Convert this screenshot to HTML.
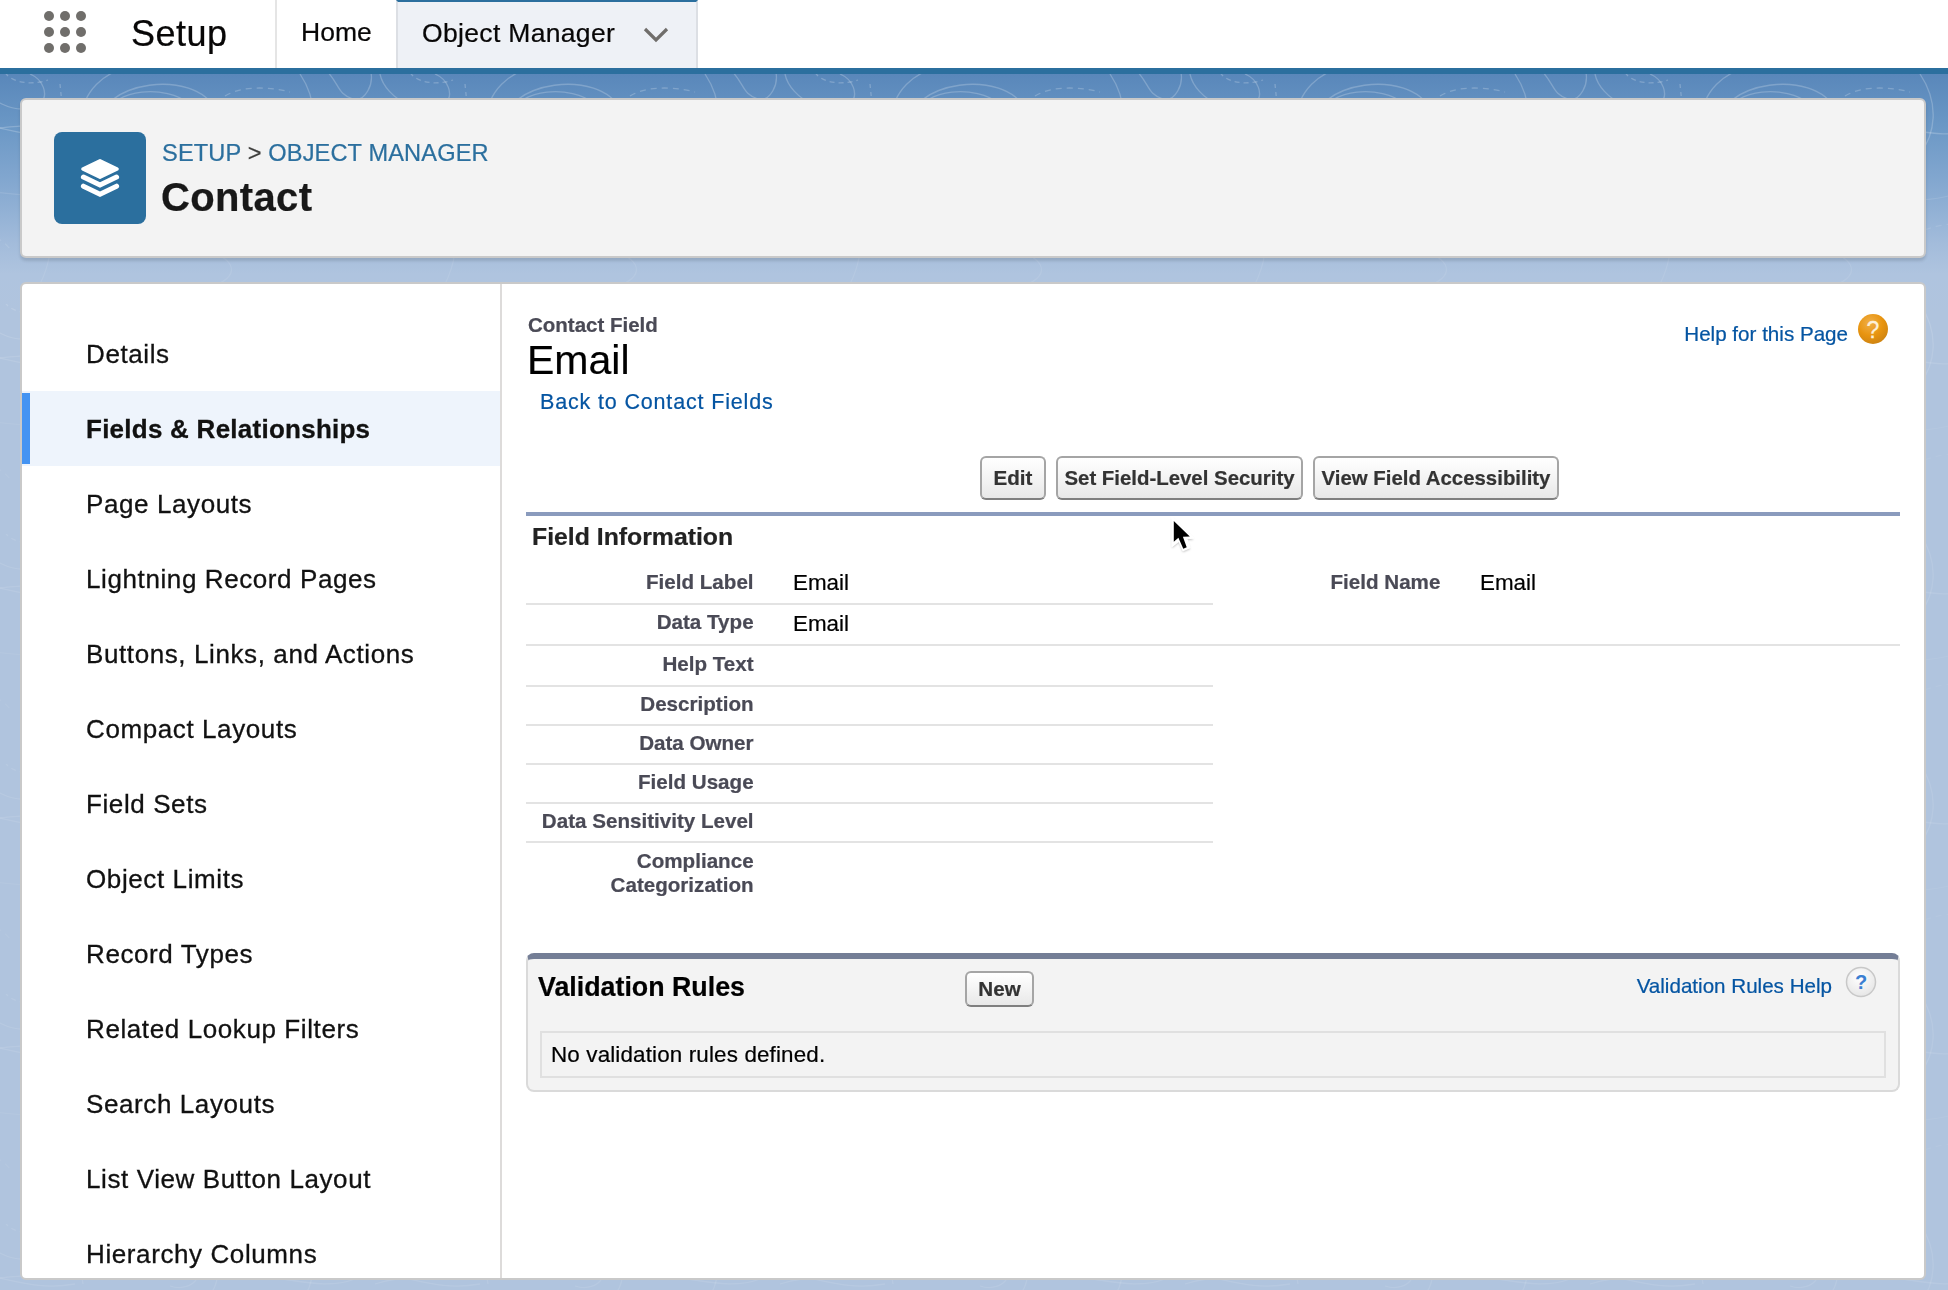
<!DOCTYPE html>
<html><head><meta charset="utf-8">
<style>
*{box-sizing:border-box;margin:0;padding:0}
html,body{width:1948px;height:1290px;overflow:hidden}
.abs,.side,.lbl,.val,.btn{will-change:transform}
.abs,.lbl,.val,.btn{-webkit-text-stroke-width:0.22px}
body{position:relative;font-family:"Liberation Sans",sans-serif;background:#b0c4de;color:#080707}
.abs{position:absolute;white-space:nowrap}
#nav{position:absolute;left:0;top:0;width:1948px;height:68px;background:#fff}
.dot{position:absolute;width:10px;height:10px;border-radius:50%;background:#706e6b}
#bar{position:absolute;left:0;top:68px;width:1948px;height:6px;background:#2b6f9e}
#bg{position:absolute;left:0;top:74px;width:1948px;height:1216px;background:linear-gradient(to bottom,#5987ba 0px,#6a97c5 50px,#84a8d0 110px,#a3bcdb 170px,#afc4df 200px,#b0c4de 240px)}
#hdr{position:absolute;left:20px;top:98px;width:1906px;height:160px;background:#f3f3f3;border:2px solid #c9c9c9;border-radius:6px;box-shadow:0 3px 3px rgba(0,0,0,.12)}
#main{position:absolute;left:20px;top:282px;width:1906px;height:998px;background:#fff;border:2px solid #c9c9c9;border-radius:6px;overflow:hidden}
.side{position:absolute;left:86px;margin-top:1px;font-size:26px;line-height:75px;color:#111;letter-spacing:0.6px;-webkit-text-stroke:0.3px #111}
.lbl{position:absolute;font-weight:bold;font-size:20.6px;color:#4a4a56;text-align:right}
.val{position:absolute;font-size:22.4px;color:#000}
.hr{position:absolute;height:2px;background:#e3e3e3}
.btn{position:absolute;border:2px solid #a5a5a5;border-bottom-color:#7f7f7f;border-radius:6px;background:linear-gradient(#fff 0%,#f4f4f4 50%,#e8e8e8 100%);font-weight:bold;font-size:20.6px;color:#333;text-align:center}
a,.link{color:#0555a2;text-decoration:none}
</style></head>
<body>
<div id="nav">
  <div class="dot" style="left:44px;top:11px"></div><div class="dot" style="left:60px;top:11px"></div><div class="dot" style="left:76px;top:11px"></div>
  <div class="dot" style="left:44px;top:27px"></div><div class="dot" style="left:60px;top:27px"></div><div class="dot" style="left:76px;top:27px"></div>
  <div class="dot" style="left:44px;top:43px"></div><div class="dot" style="left:60px;top:43px"></div><div class="dot" style="left:76px;top:43px"></div>
  <div class="abs" style="left:131px;top:12px;font-size:36px;line-height:44px;color:#080707;letter-spacing:0.5px">Setup</div>
  <div style="position:absolute;left:275px;top:0;width:2px;height:68px;background:#e5e5e5"></div>
  <div class="abs" style="left:301px;top:14px;font-size:26.5px;line-height:36px;color:#080707">Home</div>
  <div style="position:absolute;left:396px;top:0;width:302px;height:68px;background:#eef1f6;border-left:2px solid #dcdfe4;border-right:2px solid #dcdfe4;border-top:2px solid #2b6f9e"></div>
  <div class="abs" style="left:422px;top:14.7px;font-size:26.5px;line-height:36px;color:#080707;letter-spacing:0.33px">Object Manager</div>
  <svg style="position:absolute;left:642px;top:26px" width="28" height="18" viewBox="0 0 28 18"><path d="M3 3 L14 14 L25 3" fill="none" stroke="#706e6b" stroke-width="3.2"/></svg>
</div>
<div id="bar"></div>
<div id="bg"><svg width="1948" height="1216" style="position:absolute;left:0;top:0">
<defs><pattern id="topo" x="-330" y="0" width="405" height="230" patternUnits="userSpaceOnUse">
<g fill="none" stroke="#ffffff" stroke-opacity="0.22" stroke-width="1.3">
<path d="M30 40 C40 15 90 10 115 30 C135 45 120 70 95 62"/>
<path d="M20 55 C25 5 120 -5 140 35 C150 60 130 90 100 80"/>
<path d="M55 40 L62 28 L70 40 L80 30 L90 42"/>
<path d="M8 60 C0 20 30 -10 75 -8" />
<path d="M150 22 C170 10 200 14 215 18" stroke-dasharray="6 5"/>
<path d="M225 0 C245 30 240 60 225 80"/>
<path d="M250 -5 C265 10 262 20 278 25 C290 28 300 10 295 -5"/>
<path d="M305 0 C310 25 350 45 370 30 C380 20 372 5 360 0"/>
<path d="M335 -2 C340 8 360 12 378 6" stroke-dasharray="5 4"/>
<path d="M390 10 L392 30" stroke-dasharray="4 4"/>
<path d="M300 60 C330 50 360 55 400 45"/>
<path d="M160 55 C200 45 240 70 280 55 C320 40 350 70 405 60"/>
<path d="M0 120 C40 100 80 130 120 115 C160 100 200 140 260 120 C300 105 340 130 405 118" stroke-opacity="0.12"/>
<path d="M30 170 C60 150 120 160 150 185 C170 200 140 220 110 210" stroke-opacity="0.12"/>
<path d="M220 160 C260 140 320 150 340 175" stroke-dasharray="6 5" stroke-opacity="0.12"/>
<path d="M350 100 C380 130 390 170 370 210" stroke-opacity="0.12"/>
</g></pattern></defs>
<linearGradient id="tm" x1="0" y1="0" x2="0" y2="1216" gradientUnits="userSpaceOnUse"><stop offset="0" stop-color="#fff"/><stop offset="0.12" stop-color="#fff" stop-opacity="0.85"/><stop offset="0.25" stop-color="#fff" stop-opacity="0.45"/><stop offset="1" stop-color="#fff" stop-opacity="0.45"/></linearGradient><mask id="tmask"><rect x="0" y="0" width="1948" height="1216" fill="url(#tm)"/></mask>
<rect x="0" y="0" width="1948" height="1216" fill="url(#topo)" mask="url(#tmask)"/>
</svg></div>

<div id="hdr"></div>
<div style="position:absolute;left:54px;top:132px;width:92px;height:92px;border-radius:8px;background:#2b6f9e"></div>
<svg style="position:absolute;left:70px;top:150px" width="60" height="56" viewBox="70 150 60 56">
  <path d="M100 160.6 L117.2 169 L100 177.3 L82.8 169 Z" fill="#fff" stroke="#fff" stroke-width="3.2" stroke-linejoin="round"/>
  <path d="M83.4 177 L100 185 L116.6 177" fill="none" stroke="#fff" stroke-width="5" stroke-linecap="round" stroke-linejoin="miter"/>
  <path d="M83.4 186.2 L100 194.2 L116.6 186.2" fill="none" stroke="#fff" stroke-width="5" stroke-linecap="round" stroke-linejoin="miter"/>
</svg>
<div class="abs" style="left:161.5px;top:137.5px;font-size:23.6px;line-height:30px;color:#2b6f9e;letter-spacing:0.14px">SETUP <span style="color:#3e3e3c">&gt;</span> OBJECT MANAGER</div>
<div class="abs" style="left:161px;top:174px;font-size:40px;line-height:46px;font-weight:bold;color:#181818;letter-spacing:0.35px">Contact</div>

<div id="main">
  <div style="position:absolute;left:478px;top:0;width:2px;height:1000px;background:#dddbda"></div>
  <div style="position:absolute;left:0;top:107px;width:478px;height:75px;background:#eef4fc"></div>
  <div style="position:absolute;left:0;top:109px;width:8px;height:71px;background:#4594f2"></div>
</div>
<div id="sidebar">
  <div class="side" style="top:316px">Details</div>
  <div class="side" style="top:391px;font-weight:bold;letter-spacing:0.25px">Fields &amp; Relationships</div>
  <div class="side" style="top:466px">Page Layouts</div>
  <div class="side" style="top:541px">Lightning Record Pages</div>
  <div class="side" style="top:616px">Buttons, Links, and Actions</div>
  <div class="side" style="top:691px">Compact Layouts</div>
  <div class="side" style="top:766px">Field Sets</div>
  <div class="side" style="top:841px">Object Limits</div>
  <div class="side" style="top:916px">Record Types</div>
  <div class="side" style="top:991px">Related Lookup Filters</div>
  <div class="side" style="top:1066px">Search Layouts</div>
  <div class="side" style="top:1141px">List View Button Layout</div>
  <div class="side" style="top:1216px">Hierarchy Columns</div>
</div>

<!-- content -->
<div id="content">
  <div class="abs" style="left:528px;top:315.4px;font-size:20.5px;line-height:1;font-weight:bold;color:#4a4a56">Contact Field</div>
  <div class="abs" style="left:526.5px;top:339.6px;font-size:41px;line-height:1;color:#000">Email</div>
  <div class="abs link" style="left:540px;top:391.6px;font-size:21.5px;line-height:1;letter-spacing:0.84px">Back to Contact Fields</div>
  <div class="abs link" style="left:1600px;width:248px;text-align:right;top:324.3px;font-size:20.6px;line-height:1">Help for this Page</div>
  <svg style="position:absolute;left:1856px;top:312px" width="34" height="34" viewBox="0 0 34 34">
    <defs><radialGradient id="og" cx="40%" cy="30%" r="70%"><stop offset="0" stop-color="#f0b04a"/><stop offset="0.6" stop-color="#e8940f"/><stop offset="1" stop-color="#d08512"/></radialGradient></defs>
    <circle cx="17" cy="17" r="15" fill="url(#og)"/>
    <text x="17" y="25.5" text-anchor="middle" font-family="Liberation Sans" font-size="23" fill="#fdf0d8" stroke="#fdf0d8" stroke-width="0.3">?</text>
  </svg>
  <div class="btn" style="left:980px;top:456px;width:66px;height:44px;line-height:40px">Edit</div>
  <div class="btn" style="left:1056px;top:456px;width:247px;height:44px;line-height:40px;font-size:20.4px">Set Field-Level Security</div>
  <div class="btn" style="left:1313px;top:456px;width:246px;height:44px;line-height:40px;font-size:20.4px">View Field Accessibility</div>
  <div style="position:absolute;left:526px;top:512px;width:1374px;height:4px;background:#8a9bbd"></div>
  <div class="abs" style="left:532px;top:525.1px;font-size:24.8px;line-height:1;font-weight:bold;color:#222">Field Information</div>

  <div class="lbl" style="left:526px;width:227.6px;top:571.6px;line-height:1">Field Label</div>
  <div class="val" style="left:793.2px;top:571.8px;line-height:1">Email</div>
  <div class="lbl" style="left:1213px;width:227.4px;top:571.6px;line-height:1">Field Name</div>
  <div class="val" style="left:1480.2px;top:571.8px;line-height:1">Email</div>
  <div class="hr" style="left:526px;top:603px;width:687px"></div>
  <div class="lbl" style="left:526px;width:227.6px;top:612.2px;line-height:1">Data Type</div>
  <div class="val" style="left:793.2px;top:612.7px;line-height:1">Email</div>
  <div class="hr" style="left:526px;top:644px;width:1374px"></div>
  <div class="lbl" style="left:526px;width:227.6px;top:653.6px;line-height:1">Help Text</div>
  <div class="hr" style="left:526px;top:685px;width:687px"></div>
  <div class="lbl" style="left:526px;width:227.6px;top:694.2px;line-height:1">Description</div>
  <div class="hr" style="left:526px;top:724px;width:687px"></div>
  <div class="lbl" style="left:526px;width:227.6px;top:733.3px;line-height:1">Data Owner</div>
  <div class="hr" style="left:526px;top:763px;width:687px"></div>
  <div class="lbl" style="left:526px;width:227.6px;top:772.4px;line-height:1">Field Usage</div>
  <div class="hr" style="left:526px;top:802px;width:687px"></div>
  <div class="lbl" style="left:500px;width:253.6px;top:811.4px;line-height:1">Data Sensitivity Level</div>
  <div class="hr" style="left:526px;top:841px;width:687px"></div>
  <div class="lbl" style="left:526px;width:227.6px;top:849px;line-height:24px">Compliance<br>Categorization</div>

  <div style="position:absolute;left:526px;top:953px;width:1374px;height:139px;background:#f3f3f3;border:2px solid #dadada;border-top:6px solid #747e96;border-radius:8px"></div>
  <div class="abs" style="left:538px;top:974.4px;font-size:26.8px;line-height:1;font-weight:bold;color:#000">Validation Rules</div>
  <div class="btn" style="left:965px;top:971px;width:69px;height:36px;line-height:32px">New</div>
  <div class="abs link" style="left:1500px;width:332px;text-align:right;top:976.3px;font-size:20.6px;line-height:1">Validation Rules Help</div>
  <svg style="position:absolute;left:1843px;top:964px" width="36" height="36" viewBox="0 0 36 36">
    <defs><radialGradient id="gg" cx="45%" cy="35%" r="65%"><stop offset="0" stop-color="#ffffff"/><stop offset="1" stop-color="#e6e6e6"/></radialGradient></defs>
    <circle cx="18" cy="18" r="14.5" fill="url(#gg)" stroke="#c8c8c8" stroke-width="1.5"/>
    <text x="18" y="25" text-anchor="middle" font-family="Liberation Sans" font-weight="bold" font-size="20" fill="#3b7fd2">?</text>
  </svg>
  <div style="position:absolute;left:540px;top:1031px;width:1346px;height:47px;border:2px solid #e0e0e0"></div>
  <div class="abs" style="left:551.3px;top:1044px;font-size:22.4px;line-height:1;color:#000;letter-spacing:0.15px">No validation rules defined.</div>

  <svg style="position:absolute;left:1165px;top:514px" width="34" height="42" viewBox="1165 514 34 42">
    <defs><filter id="cs" x="-50%" y="-50%" width="200%" height="200%"><feGaussianBlur stdDeviation="1.2"/></filter></defs><path d="M1172,518.5 L1193.5,539.5 L1186.5,540 L1190,549 L1183,552 L1179,542.5 L1172,548 Z" fill="#000" fill-opacity="0.28" filter="url(#cs)"/>
    <path d="M1172,517 L1193.5,538 L1186.5,538.5 L1190,547.5 L1183,550.5 L1179,541 L1172,546.5 Z" fill="#fff" stroke="#fff" stroke-width="1.5" stroke-linejoin="round"/>
    <path d="M1173.8,520.9 L1189.8,536.6 L1182.9,536.7 L1186.7,547.2 L1183.3,548.8 L1178.4,537.7 L1173.8,541.8 Z" fill="#000"/>
  </svg>
</div>
</body></html>
